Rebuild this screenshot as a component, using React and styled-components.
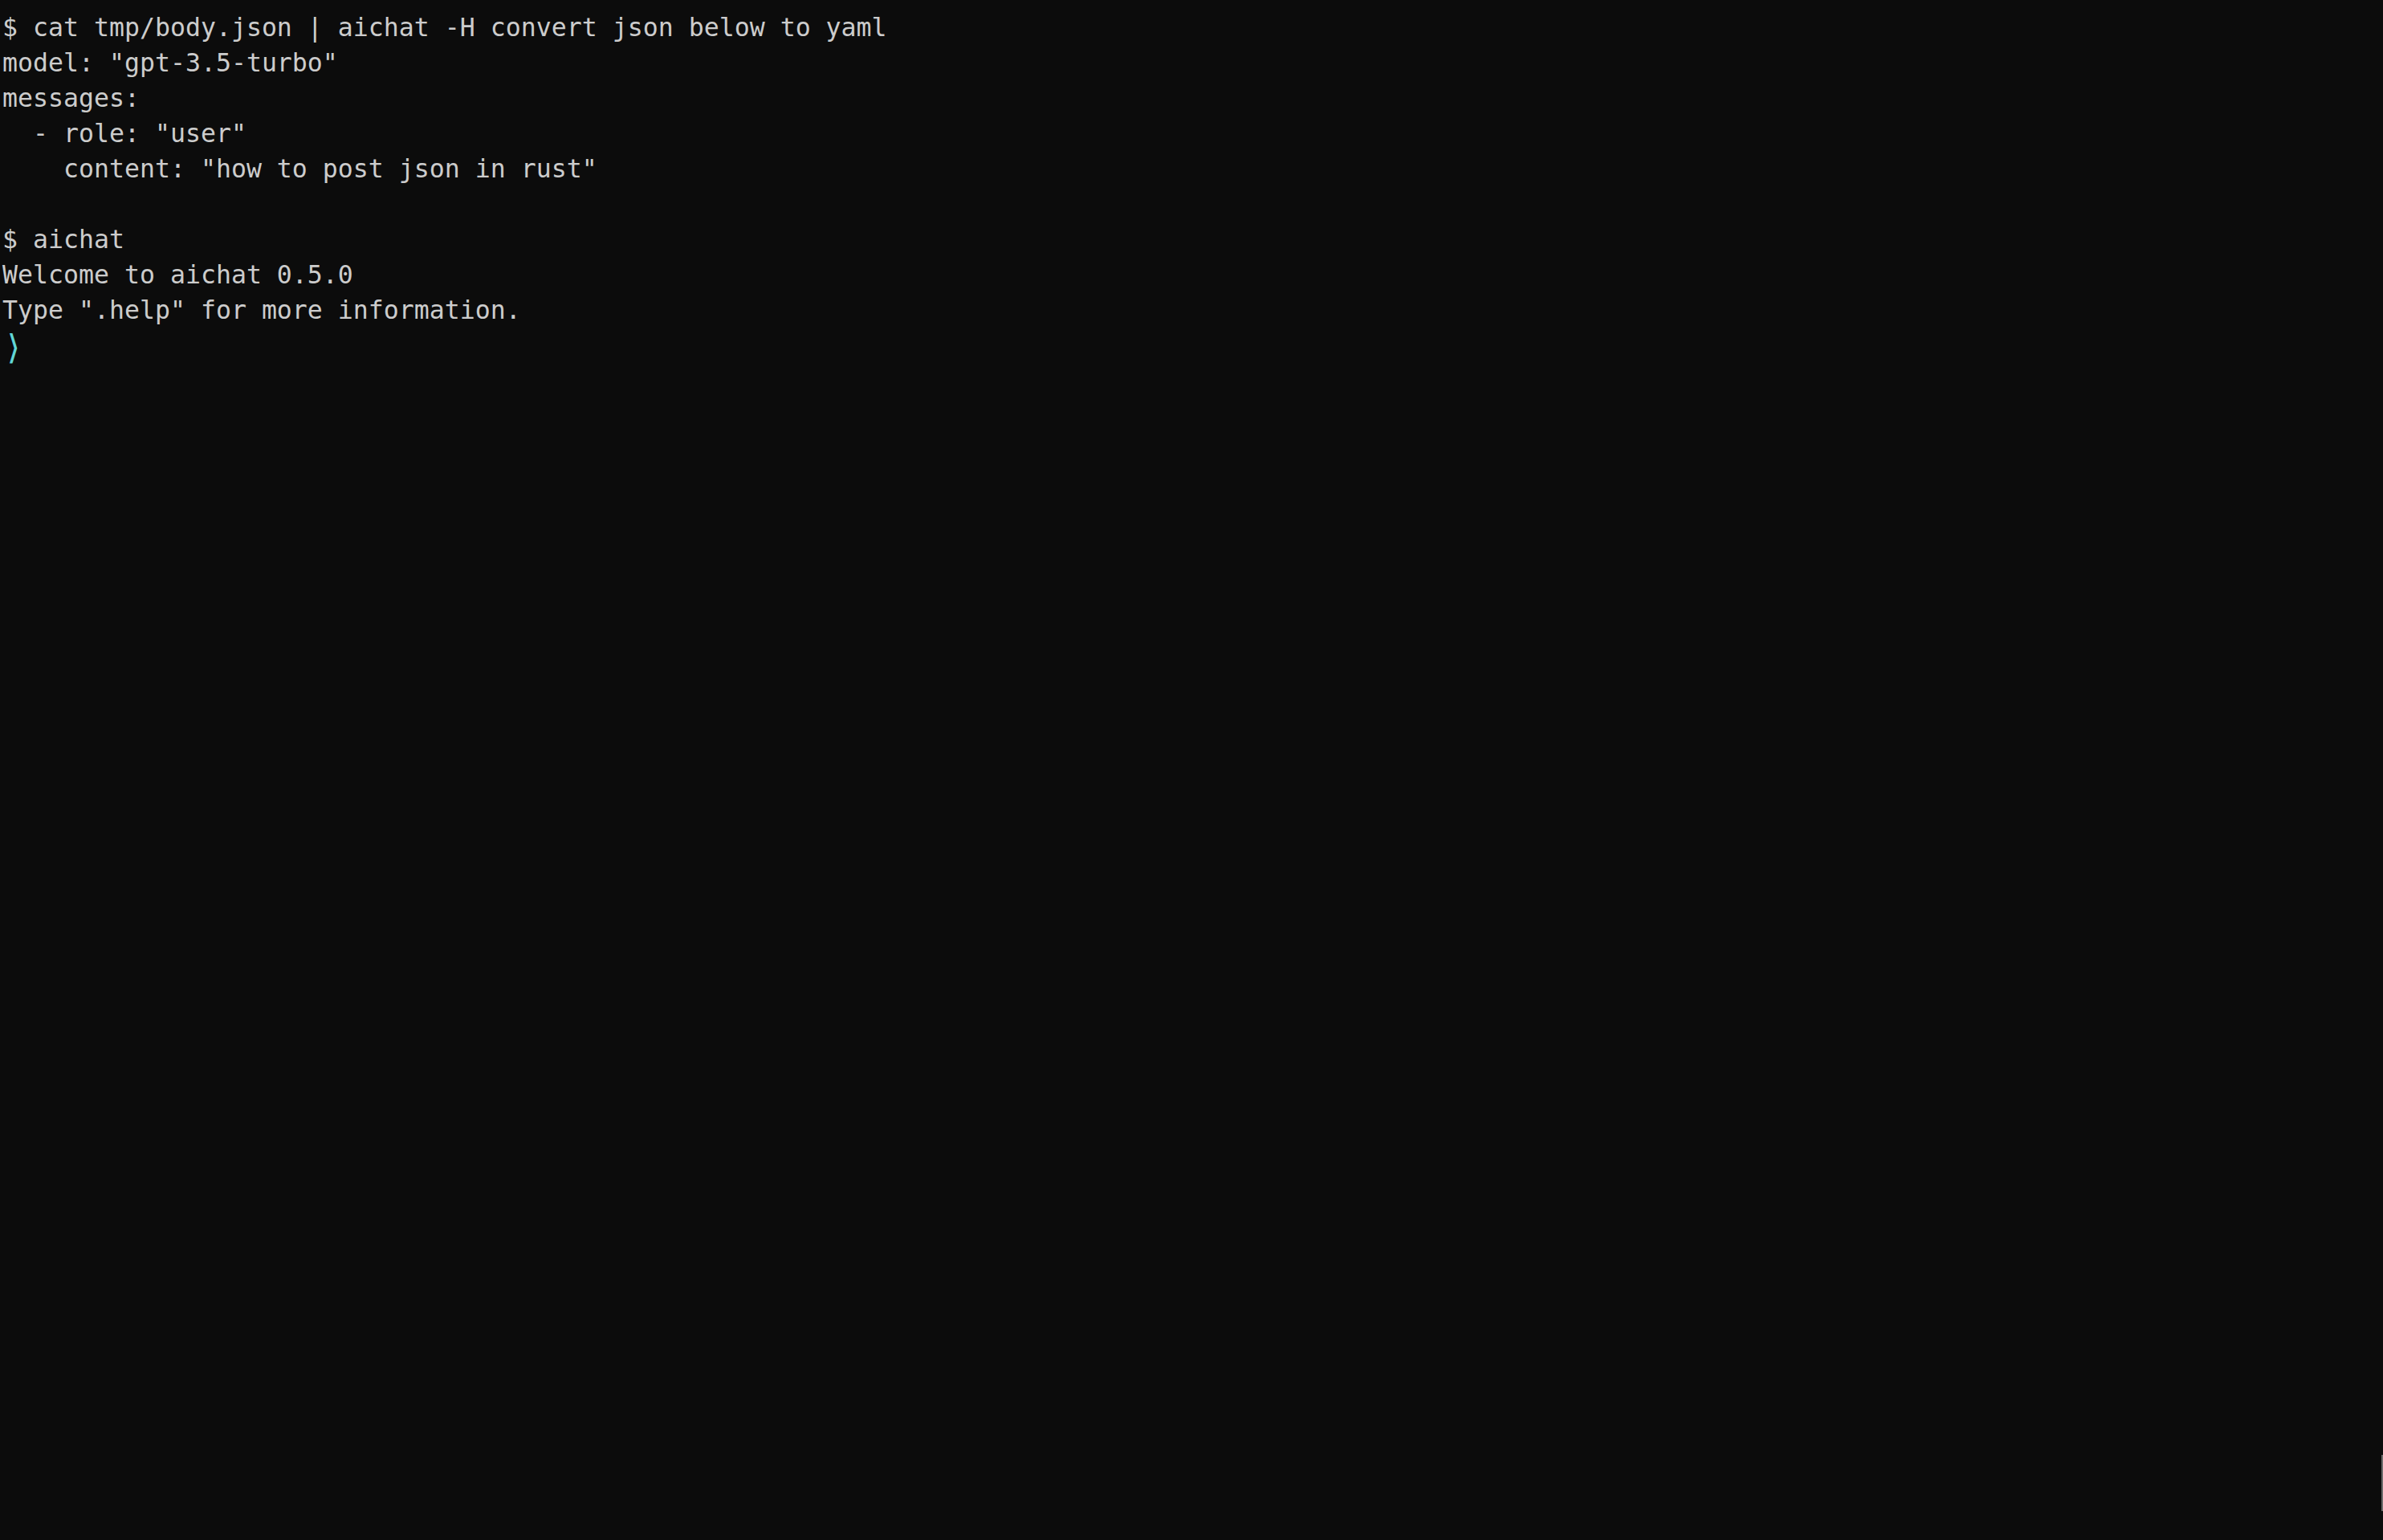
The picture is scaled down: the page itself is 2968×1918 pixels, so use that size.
import React from 'react';
import styled, {createGlobalStyle} from 'styled-components';

const GlobalStyle = createGlobalStyle`
    html, body{
        margin: 0;
        padding: 0;
        background: #0c0c0c;
    }
`

const lines = [
    '$ cat tmp/body.json | aichat -H convert json below to yaml',
    'model: "gpt-3.5-turbo"',
    'messages:',
    '  - role: "user"',
    '    content: "how to post json in rust"',
    '',
    '$ aichat',
    'Welcome to aichat 0.5.0',
    'Type ".help" for more information.',
];

const App = () =>{
    return(
        <>
        <GlobalStyle/>
        <Terminal>
            <Output>
                {lines.map((text, i) => (
                    <Line key={i}>{text}</Line>
                ))}
                <Line>
                    <Prompt>⟩</Prompt>
                </Line>
            </Output>
            <ScrollThumb/>
        </Terminal>
        </>
    )
}

const Terminal = styled.div`
    position: relative;
    width: 100vw;
    height: 100vh;
    overflow: hidden;
    background: #0c0c0c;
    color: #cccccc;
    font-family: "DejaVu Sans Mono", "Liberation Mono", monospace;
    font-size: 31.56px;
    line-height: 44px;
`

const Output = styled.div`
    display: flex;
    flex-direction: column;
    padding: 12px 0 0 3px;
`

const Line = styled.div`
    white-space: pre;
    height: 44px;
`

const Prompt = styled.span`
    display: inline-block;
    color: #61d6d6;
    font-size: 42px;
    line-height: 44px;
    padding-left: 1px;
    transform: translateY(3px);
`

const ScrollThumb = styled.div`
    position: absolute;
    right: 0;
    top: 1812px;
    width: 2px;
    height: 70px;
    background: #6a6a6a;
`

export default App;
